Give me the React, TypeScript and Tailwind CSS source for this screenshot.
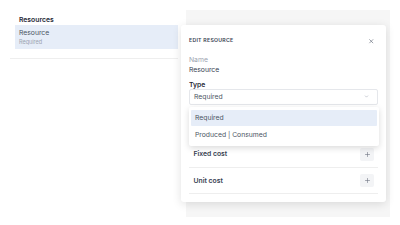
import React from 'react';
import { X, ChevronDown, Plus } from 'lucide-react';

const costRows = ['Fixed cost', 'Unit cost'];

export default function App() {
  return (
    <div className="relative w-[400px] h-[225px] bg-white font-['Inter',sans-serif] antialiased overflow-hidden">
      <div className="flex pt-[10px]">
        {/* Resource list */}
        <div className="ml-[10px] w-[168px]">
          <div className="pl-[9px] pt-[4px] text-[6.8px] leading-[11px] font-semibold text-[#1f2937]">
            Resources
          </div>
          <div className="ml-[5px] h-[24px] bg-[#e6edf8] px-[4px] pt-[3px]">
            <div className="text-[6.8px] leading-[10px] text-[#4b5563]">Resource</div>
            <div className="text-[5.5px] leading-[8px] text-[#9ca3af]">Required</div>
          </div>
          <div className="h-[10px] border-b border-[#eeeeee]" />
        </div>

        {/* Side panel background */}
        <div className="ml-[8px] w-[204px] h-[207px] bg-[#f6f6f6]" />
      </div>

      {/* Edit card */}
      <div className="absolute left-[181px] top-[25px] w-[205px] h-[177px] bg-white rounded-[3px] shadow-[0_2px_10px_rgba(0,0,0,0.12)] px-[8px]">
        <div className="flex items-center justify-between h-[31px] pt-[1px]">
          <span className="text-[5.2px] font-semibold tracking-[0.05em] text-[#374151]">EDIT RESOURCE</span>
          <X size={6.5} strokeWidth={2.5} className="text-[#6b7280] mr-[4px]" />
        </div>

        <div className="h-[8px] text-[6.8px] leading-[8px] text-[#9ca3af]">Name</div>
        <div className="h-[9px] mt-[0.5px] text-[6.8px] leading-[9px] text-[#374151]">Resource</div>

        <div className="h-[8px] mt-[7px] text-[6.8px] leading-[8px] font-semibold text-[#1f2937]">Type</div>
        <div className="h-[16.6px] border border-[#e5e7eb] rounded-[2px] flex items-center justify-between pl-[4px] pr-[8px]">
          <span className="text-[6.8px] text-[#4b5563]">Required</span>
          <ChevronDown size={5} strokeWidth={2.5} className="text-[#9ca3af]" />
        </div>

        <div className="h-[36.2px]" />

        {costRows.map((label) => (
          <div
            key={label}
            className="h-[26.6px] border-b border-[#eeeeee] flex items-center justify-between pl-[4.5px] pr-[4px]"
          >
            <span className="text-[6.8px] font-semibold text-[#374151]">{label}</span>
            <span className="w-[14px] h-[13px] rounded-[2px] bg-[#f3f4f6] flex items-center justify-center">
              <Plus size={7} strokeWidth={2} className="text-[#6b7280]" />
            </span>
          </div>
        ))}

        {/* Open dropdown */}
        <div className="absolute left-[8px] top-[82px] w-[190px] h-[39px] bg-white rounded-[2px] shadow-[0_2px_6px_rgba(0,0,0,0.15)] px-[2px] pt-[3px]">
          <div className="h-[16px] bg-[#e6edf8] rounded-[1px] flex items-center pl-[4px] text-[6.8px] text-[#4b5563]">
            Required
          </div>
          <div className="h-[19px] flex items-center pl-[4px] text-[6.8px] text-[#4b5563]">
            Produced | Consumed
          </div>
        </div>
      </div>
    </div>
  );
}
